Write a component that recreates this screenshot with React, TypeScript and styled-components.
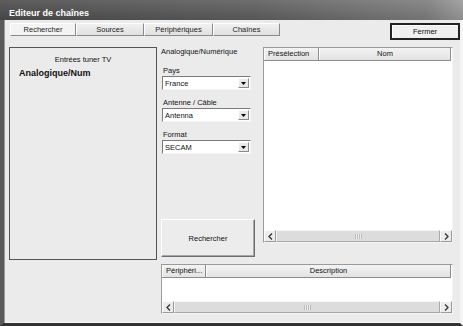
import React from 'react';
import styled, { createGlobalStyle } from 'styled-components';

const GlobalStyle = createGlobalStyle`
  html, body {
    margin: 0;
    padding: 0;
    background: #ebebeb;
  }
  * {
    box-sizing: border-box;
  }
  body {
    font-family: "Liberation Sans", Arial, sans-serif;
    font-size: 7.5px;
    color: #111;
  }
`;

const Window = styled.div`
  width: 463px;
  height: 326px;
  display: flex;
  flex-direction: column;
  background: #ebebeb;
  overflow: hidden;
`;

const TitleBar = styled.div`
  height: 20px;
  flex: none;
  padding: 8px 9px 0;
  line-height: 11px;
  font-size: 9px;
  font-weight: bold;
  color: #fff;
  background: linear-gradient(to bottom, rgba(255, 255, 255, 0.1), rgba(0, 0, 0, 0.08)),
    linear-gradient(to right, #4b4b4b, #5d5d5d 55%, #7c7c7c 92%, #9a9a9a);
`;

const Body = styled.div`
  flex: 1;
  display: flex;
  flex-direction: column;
  border-left: 4px solid #5a5a5a;
  border-bottom: 3px solid #333;
  border-right: 3px solid #f4f4f4;
  box-shadow: inset 1px 0 0 #9a9a9a, inset 0 -1px 0 #f8f8f8;
  padding: 3px 0 0 5px;
`;

const TopRow = styled.div`
  display: flex;
  align-items: flex-start;
  height: 17px;
  flex: none;
`;

const Tabs = styled.div`
  display: flex;
  margin-left: 1px;
`;

const Tab = styled.div<{ $w: number; $active?: boolean }>`
  width: ${(p) => p.$w}px;
  height: 13px;
  display: flex;
  align-items: center;
  justify-content: center;
  line-height: 10px;
  color: #222;
  background: ${(p) => (p.$active ? '#f3f3f3' : 'linear-gradient(#f0f0f0, #e0e0e0)')};
  border: 1px solid;
  border-color: #fff #8a8a8a #8a8a8a #fff;
`;

const CloseButton = styled.div`
  margin-left: auto;
  width: 70px;
  height: 17px;
  display: flex;
  align-items: center;
  justify-content: center;
  background: #efefef;
  border: 2px solid #222;
  box-shadow: inset 1px 1px 0 #fff;
`;

const Main = styled.div`
  margin-top: 7px;
  display: grid;
  grid-template-columns: 148px 98px 190px;
  grid-template-rows: 213px 50px;
  column-gap: 4px;
  row-gap: 4px;
`;

const TunerPanel = styled.div`
  border: 1px solid #555;
  padding: 7px 0 0 9px;
  background: #ebebeb;
`;

const PanelCaption = styled.div`
  line-height: 10px;
  text-align: center;
  padding-right: 9px;
`;

const TunerName = styled.div`
  margin-top: 3px;
  white-space: nowrap;
  font-size: 9px;
  font-weight: bold;
  line-height: 11px;
`;

const SearchColumn = styled.div`
  display: flex;
  flex-direction: column;
`;

const SectionTitle = styled.div`
  line-height: 10px;
  margin-bottom: 9px;
`;

const Field = styled.div`
  display: flex;
  flex-direction: column;
  margin-bottom: 8px;
  padding-left: 1px;
`;

const FieldLabel = styled.div`
  line-height: 10px;
  padding-left: 1px;
`;

const Select = styled.div`
  width: 89px;
  height: 14px;
  display: flex;
  align-items: center;
  padding: 0 1px 0 2px;
  background: #fff;
  border: 1px solid;
  border-color: #7a7a7a #f4f4f4 #f4f4f4 #7a7a7a;
`;

const SelectArrow = styled.span`
  margin-left: auto;
  width: 11px;
  height: 10px;
  display: flex;
  align-items: center;
  justify-content: center;
  background: #e9e9e9;
  border: 1px solid;
  border-color: #fff #8a8a8a #8a8a8a #fff;
`;

const SearchButton = styled.div`
  margin-top: auto;
  margin-bottom: 3px;
  width: 94px;
  height: 38px;
  display: flex;
  align-items: center;
  justify-content: center;
  background: #ececec;
  border: 1px solid;
  border-color: #fff #6e6e6e #6e6e6e #fff;
  box-shadow: inset -1px -1px 0 #a8a8a8;
`;

const ListBox = styled.div<{ $h: number; $span?: boolean }>`
  height: ${(p) => p.$h}px;
  grid-column: ${(p) => (p.$span ? '2 / 4' : 'auto')};
  align-self: start;
  display: flex;
  flex-direction: column;
  background: #fff;
  border: 1px solid;
  border-color: #9a9a9a #f4f4f4 #f4f4f4 #9a9a9a;
  overflow: hidden;
`;

const ListHeader = styled.div`
  display: flex;
  height: 13px;
  flex: none;
  background: linear-gradient(#f3f3f3, #e3e3e3);
  border-bottom: 1px solid #8c8c8c;
  margin-right: 1px;
`;

const HeaderCell = styled.div<{ $w?: number; $left?: boolean }>`
  ${(p) => (p.$w ? `width: ${p.$w}px; flex: none;` : 'flex: 1;')}
  display: flex;
  align-items: center;
  justify-content: ${(p) => (p.$left ? 'flex-start' : 'center')};
  padding-left: ${(p) => (p.$left ? '3px' : '0')};
  line-height: 10px;
  white-space: nowrap;
  border-left: 1px solid #fff;
  border-right: 1px solid #8c8c8c;
`;

const ListRows = styled.div`
  flex: 1;
`;

const ScrollBar = styled.div`
  display: flex;
  height: 12px;
  flex: none;
  background: #f1f1f1;
`;

const ScrollArrow = styled.div`
  width: 12px;
  height: 12px;
  flex: none;
  display: flex;
  align-items: center;
  justify-content: center;
  background: #ececec;
  border: 1px solid;
  border-color: #fff #9a9a9a #9a9a9a #fff;
`;

const ScrollThumb = styled.div`
  flex: 1;
  display: flex;
  align-items: center;
  justify-content: center;
  background: #dcdcdc;
  border: 1px solid;
  border-color: #f4f4f4 #a8a8a8 #a8a8a8 #f4f4f4;
`;

const Grip = styled.div`
  width: 7px;
  height: 5px;
  background: repeating-linear-gradient(to right, #bdbdbd 0 1px, #ececec 1px 2px);
`;

const Chevron = ({ dir }: { dir: 'left' | 'right' }) => (
  <svg width="5" height="7" viewBox="0 0 5 7">
    <polyline
      points={dir === 'left' ? '4,0.5 1,3.5 4,6.5' : '1,0.5 4,3.5 1,6.5'}
      fill="none"
      stroke="#333"
      strokeWidth="1.3"
    />
  </svg>
);

const DownArrow = () => (
  <svg width="5" height="3" viewBox="0 0 5 3">
    <polygon points="0,0 5,0 2.5,3" fill="#000" />
  </svg>
);

const HScroll = () => (
  <ScrollBar>
    <ScrollArrow>
      <Chevron dir="left" />
    </ScrollArrow>
    <ScrollThumb>
      <Grip />
    </ScrollThumb>
    <ScrollArrow>
      <Chevron dir="right" />
    </ScrollArrow>
  </ScrollBar>
);

const tabs = [
  { label: 'Rechercher', w: 66 },
  { label: 'Sources', w: 68 },
  { label: 'Périphériques', w: 69 },
  { label: 'Chaînes', w: 67 },
];

const fields = [
  { label: 'Pays', value: 'France' },
  { label: 'Antenne / Câble', value: 'Antenna' },
  { label: 'Format', value: 'SECAM' },
];

export default function App() {
  return (
    <>
      <GlobalStyle />
      <Window>
        <TitleBar>Editeur de chaînes</TitleBar>
        <Body>
          <TopRow>
            <Tabs>
              {tabs.map((t, i) => (
                <Tab key={t.label} $w={t.w} $active={i === 0}>
                  {t.label}
                </Tab>
              ))}
            </Tabs>
            <CloseButton>Fermer</CloseButton>
          </TopRow>
          <Main>
            <TunerPanel>
              <PanelCaption>Entrées tuner TV</PanelCaption>
              <TunerName>Analogique/Num</TunerName>
            </TunerPanel>
            <SearchColumn>
              <SectionTitle>Analogique/Numérique</SectionTitle>
              {fields.map((f) => (
                <Field key={f.label}>
                  <FieldLabel>{f.label}</FieldLabel>
                  <Select>
                    {f.value}
                    <SelectArrow>
                      <DownArrow />
                    </SelectArrow>
                  </Select>
                </Field>
              ))}
              <SearchButton>Rechercher</SearchButton>
            </SearchColumn>
            <ListBox $h={196}>
              <ListHeader>
                <HeaderCell $w={55} $left>
                  Présélection
                </HeaderCell>
                <HeaderCell>Nom</HeaderCell>
              </ListHeader>
              <ListRows />
              <HScroll />
            </ListBox>
            <ListBox $h={50} $span>
              <ListHeader>
                <HeaderCell $w={44} $left>
                  Périphéri...
                </HeaderCell>
                <HeaderCell>Description</HeaderCell>
              </ListHeader>
              <ListRows />
              <HScroll />
            </ListBox>
          </Main>
        </Body>
      </Window>
    </>
  );
}
